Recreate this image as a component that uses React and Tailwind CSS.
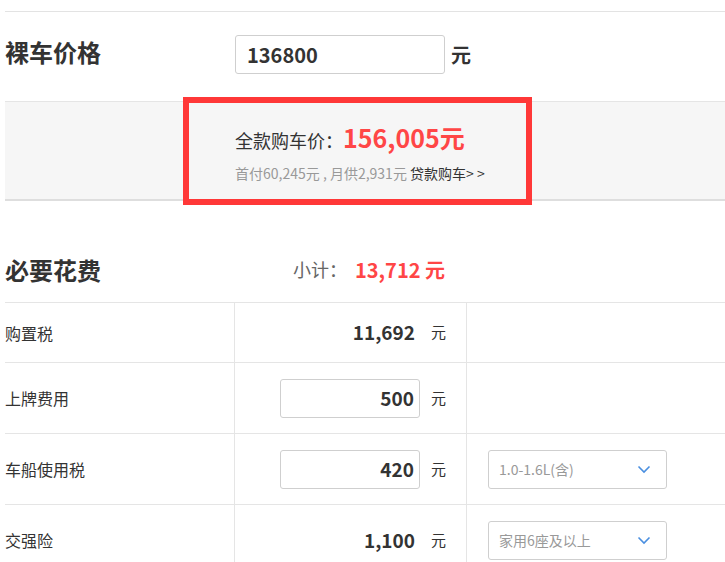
import React from "react";

const font = { fontFamily: '"Noto Sans CJK SC", "Noto Sans", sans-serif' };

function Chevron() {
  return (
    <svg width="14" height="9" viewBox="0 0 14 9" fill="none">
      <path d="M1.5 1.5 L7 7 L12.5 1.5" stroke="#4a8fe0" strokeWidth="1.6" />
    </svg>
  );
}

function Select({ text }) {
  return (
    <div className="flex h-[39px] w-[179px] items-center justify-between rounded-[3px] border border-[#cfcfcf] bg-white pl-[10px] pr-[15px] text-[14px] text-[#999]">
      <span>{text}</span>
      <Chevron />
    </div>
  );
}

function Row({ label, value, input, select, h }) {
  return (
    <div className={`grid grid-cols-[229px_232px_1fr] border-b border-[#e5e5e5] ${h}`}>
      <div className="flex items-center text-[16px] text-[#333]">{label}</div>
      <div className="flex items-center justify-end border-l border-[#e5e5e5] pr-[20px]">
        {input ? (
          <div className="flex h-[39px] w-[140px] items-center justify-end rounded-[3px] border border-[#cfcfcf] pr-[5px] text-[19px] font-bold text-[#333]">
            {value}
          </div>
        ) : (
          <div className="pr-[5px] text-[19px] font-bold text-[#333]">{value}</div>
        )}
        <span className="ml-[11px] text-[15px] text-[#333]">元</span>
      </div>
      <div className="flex items-center border-l border-[#e5e5e5] pl-[21px]">
        {select && <Select text={select} />}
      </div>
    </div>
  );
}

export default function App() {
  return (
    <div className="relative h-[562px] w-[725px] overflow-hidden bg-white" style={font}>
      <div className="ml-[5px] pt-[11px]">
        <div className="border-t border-[#e3e3e3]" />
        <div className="flex h-[89px] items-center pb-[4px]">
          <div className="-mt-[6px] w-[230px] text-[24px] font-bold text-[#333]">裸车价格</div>
          <div className="flex h-[39px] w-[210px] items-center rounded-[3px] border border-[#cfcfcf] pl-[11px] text-[20px] font-bold text-[#333]">
            136800
          </div>
          <span className="ml-[6px] text-[20px] font-bold text-[#333]">元</span>
        </div>
        <div className="flex h-[100px] flex-col justify-center border-t border-[#e5e5e5] border-b-2 border-b-[#dedede] bg-[#f6f6f6] pl-[230px] pt-[2px]">
          <div className="flex items-baseline">
            <span className="text-[18px] text-[#333]">全款购车价：</span>
            <span className="text-[25px] font-bold text-[#ff4646]">156,005元</span>
          </div>
          <div className="mt-[6px] text-[14px] text-[#999]">
            首付60,245元 , 月供2,931元 <span className="text-[#333]">贷款购车&gt; &gt;</span>
          </div>
        </div>
        <div className="flex h-[101px] items-center pt-[36px]">
          <div className="w-[288px] text-[24px] font-bold text-[#333]">必要花费</div>
          <span className="text-[18px] text-[#666]">小计：</span>
          <span className="ml-[8px] text-[20px] font-bold text-[#ff4646]">13,712 元</span>
        </div>
        <div className="border-t border-[#e5e5e5]">
          <Row label="购置税" value="11,692" h="h-[60px]" />
          <Row label="上牌费用" value="500" input h="h-[71px]" />
          <Row label="车船使用税" value="420" input select="1.0-1.6L(含)" h="h-[71px]" />
          <Row label="交强险" value="1,100" select="家用6座及以上" h="h-[71px]" />
        </div>
      </div>
      <div className="absolute left-[183px] top-[97px] h-[108px] w-[349px] border-[6px] border-[#ff3838]" />
    </div>
  );
}
